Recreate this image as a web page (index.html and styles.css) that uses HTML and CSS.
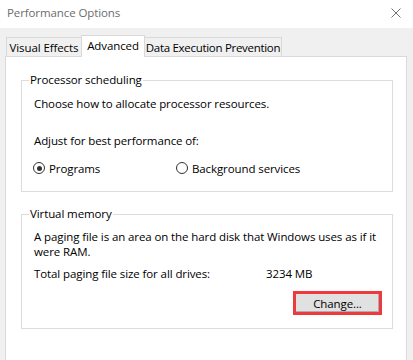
FILE: index.html
```html
<!DOCTYPE html>
<html lang="en">
<head>
  <meta charset="UTF-8">
  <title>Performance Options</title>
  <link rel="stylesheet" href="styles.css">
</head>
<body>
  <div class="titlebar">
    <span class="title">Performance Options</span>
    <svg class="close" width="10" height="10" viewBox="0 0 10 10">
      <path d="M0.5 0.5 L9.5 9.5 M9.5 0.5 L0.5 9.5" stroke="#707070" stroke-width="1" fill="none"/>
    </svg>
  </div>

  <div class="tabs">
    <div class="tab tab-visual">Visual Effects</div>
    <div class="tab tab-advanced active">Advanced</div>
    <div class="tab tab-dep">Data Execution Prevention</div>
  </div>

  <div class="panel">
    <fieldset class="group group-cpu">
      <legend>Processor scheduling</legend>
      <p class="line">Choose how to allocate processor resources.</p>
      <p class="line adjust">Adjust for best performance of:</p>
      <div class="radios">
        <label class="radio"><span class="dot checked"></span>Programs</label>
        <label class="radio"><span class="dot"></span>Background services</label>
      </div>
    </fieldset>

    <fieldset class="group group-mem">
      <legend>Virtual memory</legend>
      <p class="desc">A paging file is an area on the hard disk that Windows uses as if it were RAM.</p>
      <div class="total">
        <span class="total-label">Total paging file size for all drives:</span>
        <span>3234 MB</span>
      </div>
      <div class="actions">
        <button class="change">Change...</button>
      </div>
    </fieldset>
  </div>
</body>
</html>
```

FILE: styles.css
```css
body {
  margin: 0;
  background: #f0f0f0;
  font-family: "Open Sans", "Noto Sans", sans-serif;
  font-size: 11.5px;
  letter-spacing: -0.1px;
  color: #000;
  height: 360px;
  overflow: hidden;
}
.titlebar {
  height: 28px;
  background: #ffffff;
  display: flex;
  align-items: center;
  justify-content: space-between;
  padding: 0 12px 3px 7px;
  box-sizing: border-box;
}
.title {
  color: #6d6d6d;
}
.close {
  display: block;
}
.tabs {
  display: flex;
  align-items: flex-end;
  height: 28px;
  padding-left: 6px;
  white-space: nowrap;
}
.tab {
  height: 18px;
  line-height: 19px;
  border: 1px solid #d9d9d9;
  border-bottom: none;
  text-align: center;
  box-sizing: content-box;
  overflow: hidden;
}
.tab-visual {
  width: 74px;
  border-right: none;
}
.tab-advanced {
  width: 62px;
}
.tab-dep {
  width: 136px;
  border-left: none;
  letter-spacing: -0.3px;
}
.tab.active {
  background: #ffffff;
  height: 21px;
  line-height: 19px;
  position: relative;
  top: 1px;
}
.panel {
  margin-left: 5px;
  width: 402px;
  height: 320px;
  background: #ffffff;
  border: 1px solid #d9d9d9;
  padding: 0 13px 0 15px;
  box-sizing: border-box;
}
.group {
  margin: 0;
  border: 1px solid #dcdcdc;
  padding: 8px 10px 15px 12px;
}
.group legend {
  padding: 0 1px;
  margin-left: -5px;
  line-height: 16px;
}
.group-cpu {
  margin-top: 15px;
}
.group-mem {
  margin-top: 14px;
  padding-top: 7px;
  padding-bottom: 13px;
}
.line {
  margin: 0;
  line-height: 16px;
}
.adjust {
  margin-top: 21px;
}
.radios {
  display: flex;
  margin-top: 11px;
  height: 16px;
  align-items: center;
}
.radio {
  display: flex;
  align-items: center;
  width: 143px;
}
.dot {
  width: 12px;
  height: 12px;
  border: 1px solid #333;
  border-radius: 50%;
  margin-right: 4px;
  position: relative;
  box-sizing: border-box;
  margin-left: -1px;
}
.dot.checked::after {
  content: "";
  position: absolute;
  left: 2.5px;
  top: 2.5px;
  width: 5px;
  height: 5px;
  border-radius: 50%;
  background: #333;
}
.desc {
  margin: 0;
  line-height: 15px;
}
.total {
  display: flex;
  margin-top: 7px;
  line-height: 16px;
}
.total-label {
  width: 232px;
}
.actions {
  display: flex;
  justify-content: flex-end;
  margin-top: 9px;
}
.change {
  width: 89px;
  height: 24px;
  background: #e1e1e1;
  border: 3px solid #ee3a3e;
  box-shadow: inset -1px -1px 0 #adadad;
  font-family: inherit;
  font-size: 11.5px;
  letter-spacing: -0.1px;
  color: #000;
  padding: 0;
}
```
